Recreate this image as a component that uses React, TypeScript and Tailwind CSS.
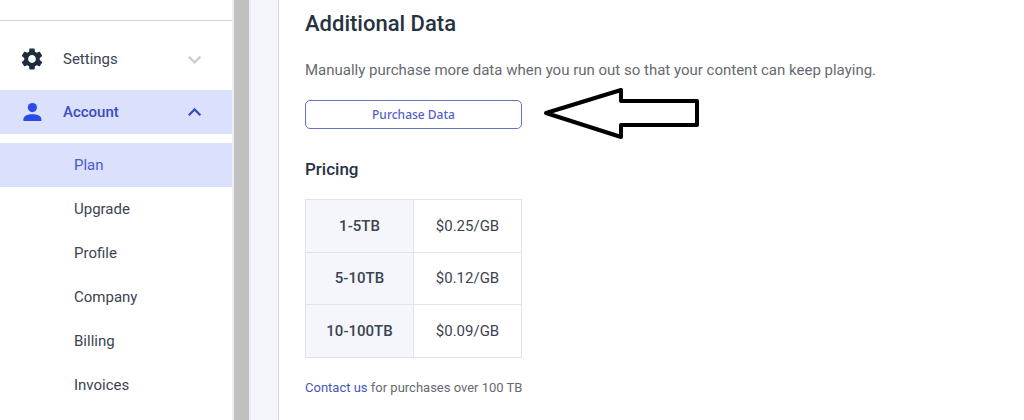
import { useState } from "react";
import clsx from "clsx";
import { MdSettings } from "react-icons/md";

const accountLinks = ["Plan", "Upgrade", "Profile", "Company", "Billing", "Invoices"];

const pricing = [
  { tier: "1-5TB", price: "$0.25/GB" },
  { tier: "5-10TB", price: "$0.12/GB" },
  { tier: "10-100TB", price: "$0.09/GB" },
];

function PersonIcon() {
  return (
    <svg className="size-7" viewBox="0 0 28 28" fill="currentColor" aria-hidden="true">
      <circle cx="14.4" cy="9.6" r="4.6" />
      <path d="M5.4 23v-1.6c0-3.7 4-5.2 9-5.2s9 1.5 9 5.2V23z" />
    </svg>
  );
}

function Chevron({ up = false }: { up?: boolean }) {
  return (
    <svg
      className="h-4 w-4"
      viewBox="0 0 16 16"
      fill="none"
      stroke="currentColor"
      strokeWidth="2.2"
      aria-hidden="true"
    >
      <path d={up ? "M2.8 11.2 8.6 5.4l5.8 5.8" : "M2.8 5.6l5.8 5.8 5.8-5.8"} />
    </svg>
  );
}

function Sidebar() {
  const [active, setActive] = useState("Plan");

  return (
    <nav className="w-[232px] shrink-0 pt-5 text-[15px] text-[#3b4450]">
      <div className="border-t border-[#d3d7da] pt-4">
        <button className="flex h-11 w-full items-center pl-[18px] pr-[30px]">
          <span className="flex w-7 justify-center text-[#1e2c3c]">
            <MdSettings className="size-[26px]" />
          </span>
          <span className="ml-[17px] flex-1 text-left">Settings</span>
          <span className="text-[#c9cdd6]">
            <Chevron />
          </span>
        </button>
        <button className="mt-[9px] flex h-11 w-full items-center bg-[#dbe0fc] pl-[18px] pr-[30px] font-medium text-[#3a4cc0]">
          <span className="text-[#2b4be6]">
            <PersonIcon />
          </span>
          <span className="ml-[17px] flex-1 text-left">Account</span>
          <Chevron up />
        </button>
      </div>
      <ul className="mt-[9px]">
        {accountLinks.map((label) => (
          <li key={label}>
            <a
              href="#"
              onClick={() => setActive(label)}
              className={clsx(
                "flex h-11 items-center pl-[74px]",
                label === active && "bg-[#dbe0fc] text-[#4c5ad0]"
              )}
            >
              {label}
            </a>
          </li>
        ))}
      </ul>
    </nav>
  );
}

export default function App() {
  return (
    <div className="flex h-screen overflow-hidden bg-white font-[Roboto,sans-serif]">
      <Sidebar />

      {/* scrollbar track and page gutter */}
      <div className="w-[19px] shrink-0 border-x-2 border-[#ededf3] bg-[#c0c0bf]" />
      <div className="w-7 shrink-0 border-r border-[#d5d7dd] bg-[#f4f6fc]" />

      <main className="flex-1 px-[26px] pt-2">
        <h1 className="text-[22px] leading-8 font-medium text-[#26323f]">Additional Data</h1>
        <p className="mt-[18px] text-[15px] leading-6 text-[#666a70]">
          Manually purchase more data when you run out so that your content can keep playing.
        </p>

        <div className="relative mt-[18px] w-[217px]">
          <button className="flex h-[29px] w-full items-center justify-center rounded-[5px] border border-[#6572c4] font-['Noto_Sans',sans-serif] text-xs font-medium text-[#5661cc]">
            Purchase Data
          </button>
          <svg
            className="absolute -top-4 left-full ml-5 h-14 w-40"
            viewBox="0 0 160 56"
            fill="#fff"
            stroke="#000"
            strokeWidth="4"
            strokeLinejoin="round"
            aria-hidden="true"
          >
            <path d="M4 29 79 6v11h76v24H79v12z" />
          </svg>
        </div>

        <h2 className="mt-7 text-[17px] leading-6 font-medium text-[#26323f]">Pricing</h2>
        <table className="mt-[18px] h-[159px] w-[217px] table-fixed border-collapse text-center text-[15px] text-[#3b4450]">
          <tbody>
            {pricing.map((row) => (
              <tr key={row.tier}>
                <th scope="row" className="border border-[#e1e3e8] bg-[#f4f6fb] font-medium">
                  {row.tier}
                </th>
                <td className="border border-[#e1e3e8]">{row.price}</td>
              </tr>
            ))}
          </tbody>
        </table>

        <p className="mt-5 text-[13px] leading-5 text-[#666a70]">
          <a href="#" className="text-[#4656b8]">
            Contact us
          </a>{" "}
          for purchases over 100 TB
        </p>
      </main>
    </div>
  );
}
